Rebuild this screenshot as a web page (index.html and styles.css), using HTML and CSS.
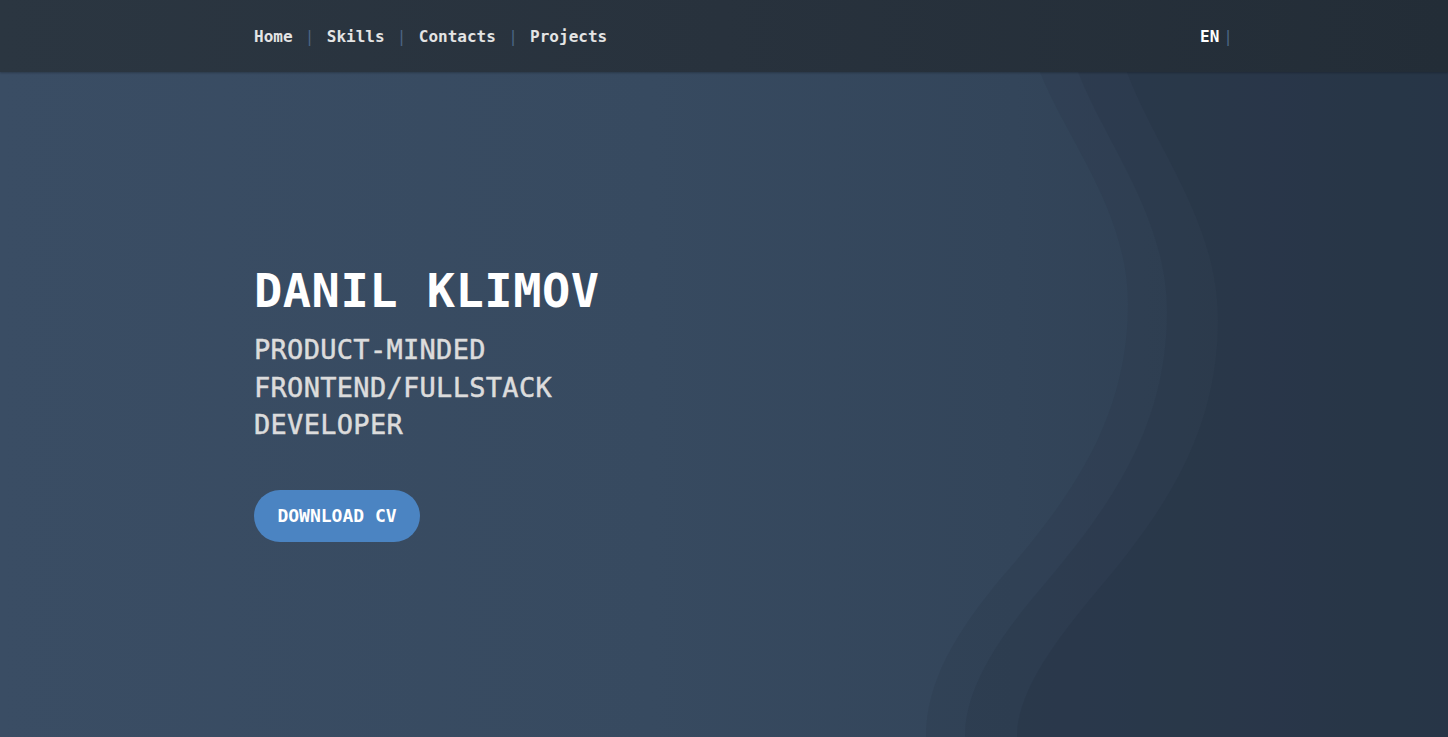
FILE: index.html
```html
<!DOCTYPE html>
<html lang="en">
<head>
<meta charset="utf-8">
<title>Danil Klimov</title>
<link rel="stylesheet" href="styles.css">
</head>
<body>
<header class="topbar">
  <nav class="nav">
    <ul class="menu">
      <li><a href="#">Home</a></li>
      <li class="sep">|</li>
      <li><a href="#">Skills</a></li>
      <li class="sep">|</li>
      <li><a href="#">Contacts</a></li>
      <li class="sep">|</li>
      <li><a href="#">Projects</a></li>
    </ul>
    <div class="lang"><span class="lang-code">EN</span><span class="sep">|</span></div>
  </nav>
</header>
<main class="hero">
  <svg class="waves" viewBox="0 0 1448 665" preserveAspectRatio="none" aria-hidden="true">
    <path class="w1" d="M1040,0 C1068,70 1128,140 1128,232 C1128,345 1072,425 1002,505 C956,560 926,610 926,665 L1448,665 L1448,0 Z"/>
    <path class="w2" d="M1078,0 C1106,72 1167,145 1167,240 C1167,355 1110,435 1042,515 C995,570 965,618 965,665 L1448,665 L1448,0 Z"/>
    <path class="w3" d="M1127,0 C1156,78 1218,150 1218,248 C1218,365 1160,445 1092,525 C1046,580 1017,625 1017,665 L1448,665 L1448,0 Z"/>
  </svg>
  <div class="hero-inner">
    <h1 class="name">DANIL KLIMOV</h1>
    <p class="role">PRODUCT-MINDED<br>FRONTEND/FULLSTACK<br>DEVELOPER</p>
    <a class="btn" href="#">DOWNLOAD CV</a>
  </div>
</main>
</body>
</html>
```
FILE: styles.css
```css
* { box-sizing: border-box; }
html, body { margin: 0; padding: 0; }
body {
  font-family: "DejaVu Sans Mono", "Liberation Mono", monospace;
  background: #2c3a4a;
  width: 1448px;
  height: 737px;
  overflow: hidden;
}
.topbar {
  height: 72px;
  background: linear-gradient(90deg, #2b3641 0%, #28323d 50%, #232d37 100%);
  position: relative;
  z-index: 2;
  box-shadow: 0 1px 2px rgba(0,0,0,0.25);
}
.nav {
  height: 72px;
  display: flex;
  align-items: center;
  justify-content: space-between;
  padding: 0 215px 0 254px;
}
.menu {
  list-style: none;
  margin: 0;
  padding: 0;
  display: flex;
  align-items: center;
}
.menu a {
  color: #e4e4e4;
  text-decoration: none;
  font-size: 16px;
  font-weight: bold;
  letter-spacing: 0;
}
.sep {
  color: #4b6584;
  font-size: 16px;
  margin: 0 12.3px;
}
.lang { display: flex; align-items: center; }
.lang-code {
  color: #ffffff;
  font-size: 16px;
  font-weight: bold;
}
.lang .sep { margin: 0 0 0 4px; }
.hero {
  position: relative;
  height: 665px;
  background: linear-gradient(90deg, #3a4d64 0%, #374a60 45%, #33455a 70%, #2c3b4d 100%);
  overflow: hidden;
}
.waves {
  position: absolute;
  inset: 0;
  width: 100%;
  height: 100%;
}
.w1 { fill: #253242; opacity: 0.18; }
.w2 { fill: #253242; opacity: 0.24; }
.w3 { fill: #253242; opacity: 0.3; }
.hero-inner {
  position: relative;
  padding: 191px 0 0 254px;
}
.name {
  margin: 0;
  color: #ffffff;
  font-size: 47px;
  font-weight: bold;
  line-height: 56px;
  letter-spacing: 0.5px;
}
.role {
  margin: 12px 0 0;
  color: #dcdcdc;
  font-size: 27px;
  font-weight: normal;
  line-height: 37.5px;
  letter-spacing: 0.3px;
  -webkit-text-stroke: 0.5px #dcdcdc;
}
.btn {
  display: inline-flex;
  align-items: center;
  justify-content: center;
  margin-top: 46px;
  width: 166px;
  height: 52px;
  border-radius: 26px;
  background: #4b84c2;
  color: #ffffff;
  font-size: 18px;
  font-weight: bold;
  text-decoration: none;
}
```
